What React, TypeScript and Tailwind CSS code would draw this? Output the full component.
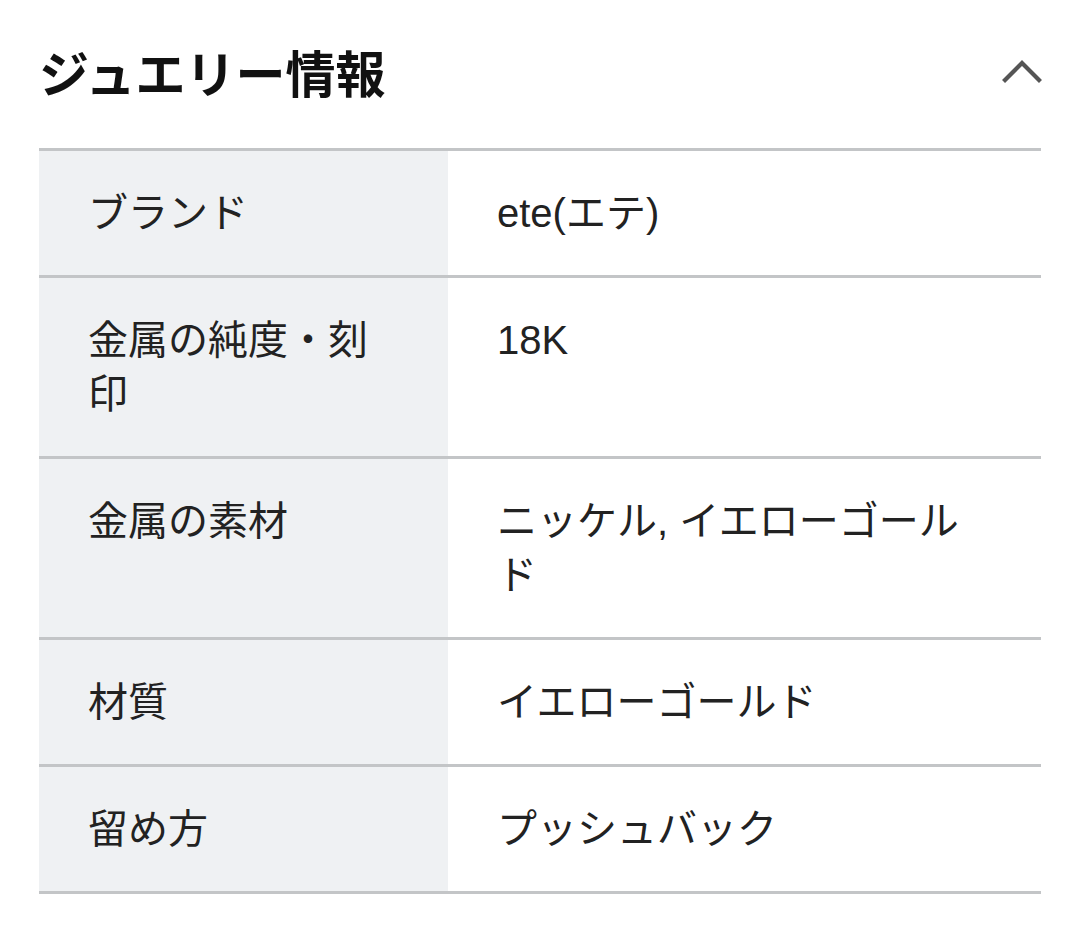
import React from "react";

const rows: [string, string][] = [
  ["ブランド", "ete(エテ)"],
  ["金属の純度・刻印", "18K"],
  ["金属の素材", "ニッケル, イエローゴールド"],
  ["材質", "イエローゴールド"],
  ["留め方", "プッシュバック"],
];

export default function App() {
  return (
    <div
      className="w-[1080px] h-[945px] bg-white text-[#222222]"
      style={{ fontFamily: '"Liberation Sans", "Noto Sans CJK JP", sans-serif' }}
    >
      <div className="mx-[39px]">
        <div className="flex items-center justify-between h-[144px]">
          <h2
            className="text-[50px] font-bold leading-none text-[#111111] mt-[-2px]"
            style={{ fontFamily: '"Noto Sans CJK JP", sans-serif' }}
          >
            ジュエリー情報
          </h2>
          <svg width="40" height="26" viewBox="0 0 40 26" className="mr-[-1px] mt-[-2px]">
            <path d="M3 22 L20 5 L37 22" fill="none" stroke="#555555" strokeWidth="4.2" strokeLinecap="square" />
          </svg>
        </div>
        <div className="mt-[4px] border-t-[3px] border-[#c3c5c7]">
          {rows.map(([k, v]) => (
            <div key={k} className="grid grid-cols-[409px_1fr] border-b-[3px] border-[#c3c5c7]">
              <div className="bg-[#eff1f3] pl-[49px] pr-[60px] pt-[35px] pb-[35px] text-[40px] leading-[54px]">{k}</div>
              <div className="pl-[49px] pr-[60px] pt-[35px] pb-[35px] text-[40px] leading-[54px]">{v}</div>
            </div>
          ))}
        </div>
      </div>
    </div>
  );
}
